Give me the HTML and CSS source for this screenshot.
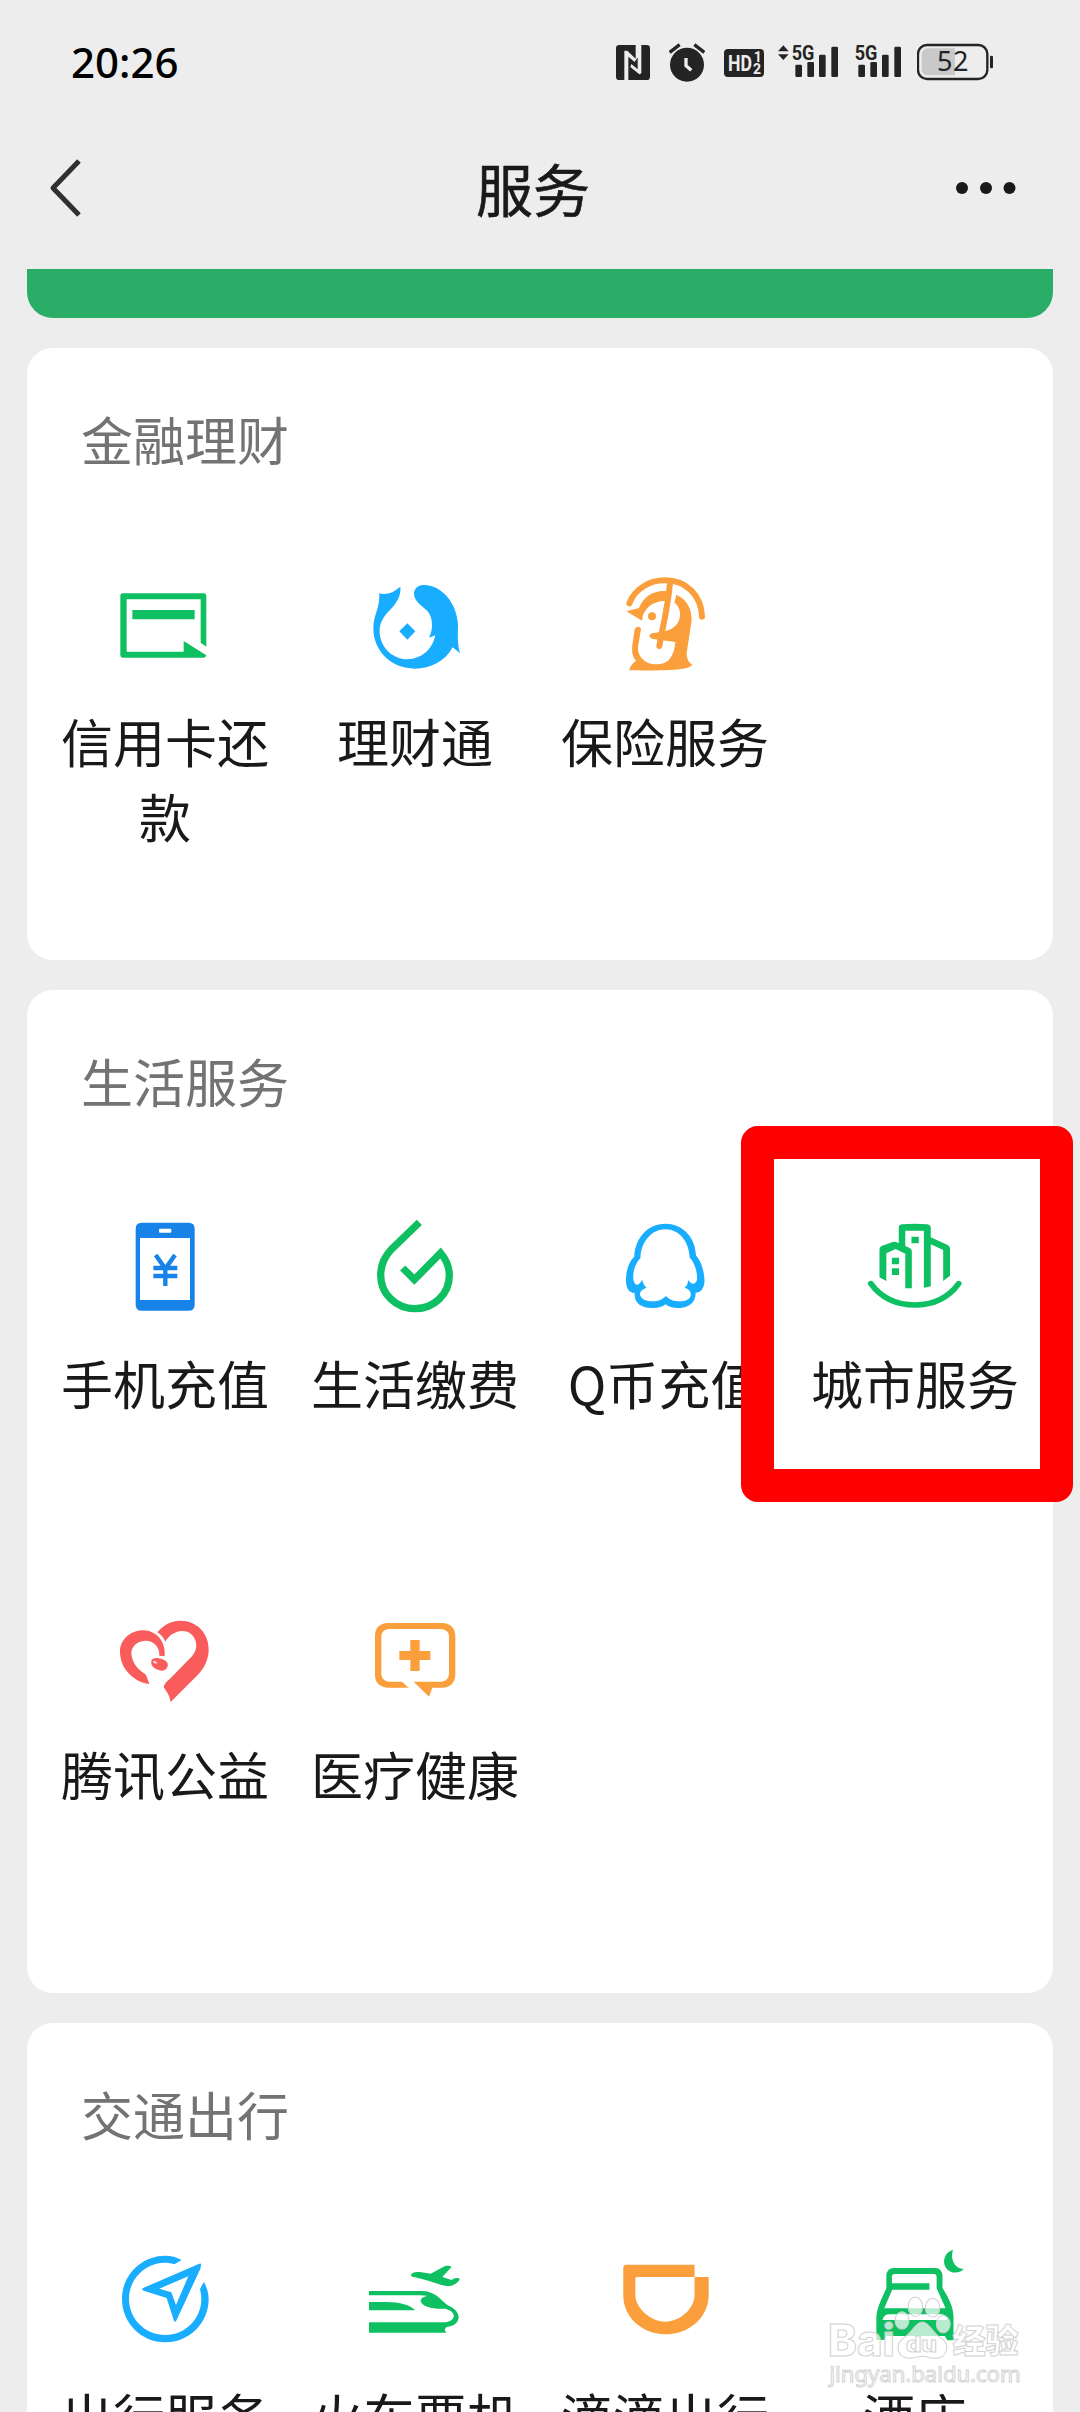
FILE: index.html
```html
<!DOCTYPE html>
<html lang="zh-CN">
<head>
<meta charset="utf-8">
<title>服务</title>
<link rel="stylesheet" href="styles.css">
</head>
<body>
<div class="status-bar">
  <span class="clock">20:26</span>
  <div class="status-icons">
    <svg class="s-nfc" viewBox="48 66 102 126"><rect x="48" y="75" width="102" height="105" rx="10" fill="#242424"/><path d="M73 180V92H82L107 116V75H114V110L104 126L85 110V180ZM113 75H124V160L118 163L91 141L94 132L113 148Z" fill="#ededed"/></svg>
    <svg class="s-alarm" viewBox="207 66 108 126"><circle cx="261" cy="134" r="51" fill="#242424"/><path d="M209 97L239 74M313 97L283 74" stroke="#242424" stroke-width="10"/><path d="M258 114V137L274 151" fill="none" stroke="#ededed" stroke-width="10"/></svg>
    <svg class="s-hd" viewBox="372 66 120 126"><rect x="372" y="87" width="120" height="84" rx="12" fill="#242424"/><text x="384" y="152" class="hd-text" textLength="72" lengthAdjust="spacingAndGlyphs">HD</text><text x="461" y="125" class="hd-num">1</text><text x="459" y="162" class="hd-num">2</text></svg>
    <svg class="s-sig1" viewBox="534 66 180 126"><path d="M534 94L550 76L566 94ZM534 103L550 120L566 103Z" fill="#242424"/><g fill="#242424"><rect x="586" y="134" width="20" height="37" rx="4"/><rect x="622" y="126" width="20" height="45" rx="4"/><rect x="657" y="104" width="20" height="67" rx="4"/><rect x="694" y="80" width="20" height="91" rx="4"/></g><text x="575" y="120" class="net" textLength="68" lengthAdjust="spacingAndGlyphs">5G</text></svg>
    <svg class="s-sig2" viewBox="765 66 138 126"><g fill="#242424"><rect x="775" y="134" width="20" height="37" rx="4"/><rect x="811" y="126" width="20" height="45" rx="4"/><rect x="846" y="104" width="20" height="67" rx="4"/><rect x="883" y="80" width="20" height="91" rx="4"/></g><text x="764" y="120" class="net" textLength="68" lengthAdjust="spacingAndGlyphs">5G</text></svg>
    <svg class="s-bat" viewBox="951 66 228 126"><path d="M985 85H1065V166H985Q965 166 965 146V105Q965 85 985 85Z" fill="#c9c9c9"/><rect x="954" y="75" width="208" height="102" rx="27" fill="none" stroke="#242424" stroke-width="7"/><rect x="1170" y="107" width="9" height="38" rx="4" fill="#242424"/><text x="1058" y="154" class="bat-text" textLength="94">52</text></svg>
  </div>
</div>
<header class="nav">
  <svg class="back" viewBox="0 0 40 60"><path d="M33 3L7 30L33 57" fill="none" stroke="#303030" stroke-width="5" stroke-linejoin="round"/></svg>
  <h1>服务</h1>
  <svg class="more" viewBox="0 0 60 12"><circle cx="6" cy="6" r="6"/><circle cx="30" cy="6" r="6"/><circle cx="53.500" cy="6" r="6"/></svg>
</header>
<main class="content">
  <div class="wallet"></div>

  <section class="card">
    <h2>金融理财</h2>
    <div class="grid">
      <div class="item">
        <svg class="icon green" viewBox="225 582 300 300"><path d="M482 788V658H260V815H431V783L499 826Q497 833 492 833H248Q241 833 241 826V647Q241 640 248 640H492Q499 640 499 647V800Z"/><path d="M277 690H464V718H277Z"/></svg>
        <span>信用卡还款</span>
      </div>
      <div class="item">
        <svg class="icon sky" viewBox="975 582 300 300"><path d="M1081 620C1084 645 1072 667 1050 690C1027 713 1017 733 1019 760C1023 806 1060 838 1102 838C1145 837 1177 808 1186 766L1167 773C1180 750 1180 713 1162 693C1150 680 1138 675 1128 660C1115 640 1124 617 1148 615C1203 613 1250 667 1254 733C1254 770 1251 785 1260 820L1238 802C1215 845 1170 866 1126 866C1052 866 1000 812 1000 745C1000 705 1020 685 1018 640C1040 646 1060 638 1081 620Z"/><path d="M1102 730L1126 754L1102 779L1078 754Z"/></svg>
        <span>理财通</span>
      </div>
      <div class="item">
        <svg class="icon orange" viewBox="225 102 300 300"><path d="M268 190C285 145 330 121 375 121C438 121 484 165 486 230M390 128C384 200 370 250 358 318" fill="none" stroke="#fa9f3c" stroke-width="18" stroke-linecap="round"/><path d="M259 214L297 204C310 170 340 150 380 153L376 183C340 182 309 205 306 242Z"/><circle cx="336" cy="229" r="12"/><path d="M409 164C440 178 455 205 455 240L440 340C440 355 445 368 457 374C446 388 410 392 268 391C268 382 275 372 288 362C277 350 275 335 277 315L284 268C287 257 303 258 303 268L294 320C292 352 318 373 350 373C385 373 402 350 406 306L338 297C325 292 325 282 338 280L365 275C400 272 422 250 420 220C419 202 410 192 403 188Z"/></svg>
        <span>保险服务</span>
      </div>
    </div>
  </section>

  <section class="card">
    <h2>生活服务</h2>
    <div class="grid">
      <div class="item">
        <svg class="icon blue" viewBox="225 108 300 300"><path fill-rule="evenodd" d="M305 128H446Q464 128 464 146V374Q464 392 446 392H305Q287 392 287 374V146Q287 128 305 128ZM300 174V360H450V174ZM360 146Q357 146 357 149V155Q357 158 360 158H391Q394 158 394 155V149Q394 146 391 146Z"/><path d="M347 225L373 262H379L405 225M340 264H412M340 288H412M376 262V318" fill="none" stroke="#1783e8" stroke-width="13"/></svg>
        <span>手机充值</span>
      </div>
      <div class="item">
        <svg class="icon" viewBox="975 108 300 300"><path d="M1138 127L1055 207C1034 229 1022 255 1022 285C1022 342 1068 386 1125 386C1182 386 1228 342 1228 286C1228 261 1218 238 1202 219L1123 299L1088 264" fill="none" stroke="#0fc062" stroke-width="22"/></svg>
        <span>生活缴费</span>
      </div>
      <div class="item">
        <svg class="icon sky" viewBox="218 318 290.400 300" preserveAspectRatio="none"><path fill-rule="evenodd" d="M364 341C412 341 452 380 453 436C470 455 478 490 478 515C476 535 468 547 452 548C454 578 430 595 402 594C385 594 372 590 365 583C355 592 340 595 325 594C295 594 273 580 275 549C255 548 249 530 250 505C251 480 258 455 274 440C276 385 312 341 364 341ZM364 358C325 358 293 395 292 444C276 463 270 480 271 508C275 530 287 528 297 509C299 518 303 528 310 533C295 538 289 545 291 556C296 570 310 574 328 574C345 574 355 568 366 558C377 570 390 574 405 574C425 574 435 568 438 556C440 545 432 537 420 533C428 527 430 520 430 510C440 524 450 526 456 510C458 485 448 455 435 443C433 395 405 358 364 358Z"/></svg>
        <span>Q币充值</span>
      </div>
      <div class="item">
        <svg class="icon green" viewBox="944 318 290.400 300" preserveAspectRatio="none"><path d="M986 502V420Q986 410 994 407L1022 397Q1030 393 1042 400V352Q1043 344 1052 343Q1088 340 1125 343Q1135 345 1135 354V382L1184 405Q1191 408 1191 416V497L1171 513V420L1135 403V529L1115 533V362H1061V408L1074 414Q1080 418 1080 424V535H1061V431L1033 417L1006 430V513Z"/><path d="M1079 380H1100V400H1079ZM1022 443H1043V463H1022ZM1022 475H1043V495H1022Z"/><path d="M961 521C990 562 1035 585 1089 585C1142 585 1187 562 1216 521" fill="none" stroke="#0fc062" stroke-width="17" stroke-linecap="round"/></svg>
        <span>城市服务</span>
      </div>
      <div class="item">
        <svg class="icon red" viewBox="225 81 300 300"><path d="M352 157C370 135 395 122 422 122C470 122 508 160 506 212C504 245 490 267 470 288L392 366C388 345 380 335 371 322C372 312 380 304 390 296L450 235C465 220 471 205 468 190C465 165 445 151 422 153C400 156 385 170 376 185C370 172 362 163 352 157Z"/><path d="M328 312C280 305 240 265 240 215C240 180 270 151 310 151C350 152 378 185 374 229L358 227C360 200 340 181 315 182C290 184 274 200 274 220C276 250 295 270 318 284Z"/><path d="M334 244C335 235 348 232 362 236C378 240 386 248 383 258C380 270 370 275 356 270C340 265 332 256 334 244Z"/><ellipse cx="345" cy="247" rx="7" ry="4" fill="#ffc4c4" transform="rotate(15 345 247)"/></svg>
        <span>腾讯公益</span>
      </div>
      <div class="item">
        <svg class="icon orange" viewBox="975 81 300 300"><path d="M1106 323H1044Q1005 320 1005 284V168Q1005 131 1044 129H1207Q1244 131 1246 168V284Q1244 321 1207 323H1177L1167 350L1121 305H1204Q1226 303 1227 281V170Q1226 149 1204 147H1047Q1025 149 1024 170V281Q1025 303 1047 305H1086Z"/><path d="M1111 180H1139V213H1171V240H1139V273H1111V240H1078V213H1111Z"/></svg>
        <span>医疗健康</span>
      </div>
    </div>
  </section>

  <section class="card">
    <h2>交通出行</h2>
    <div class="grid">
      <div class="item">
        <svg class="icon sky" viewBox="225 567 300 300"><path d="M425 600L403 613C385 607 365 607 347 612C300 625 267 667 267 717C267 777 316 825 376 825C435 825 484 777 484 717C484 706 482 697 480 688Q484 678 492 666C501 684 506 700 506 717C506 789 448 847 376 847C304 847 246 789 246 717C246 645 304 587 376 587C393 587 410 591 425 600Z"/><path fill-rule="evenodd" d="M478 611Q484 608 483 616L481 626L410 780Q405 791 401 780L380 714L311 692Q302 688 311 683ZM445 649L358 686L394 697L408 735Z"/></svg>
        <span>出行服务</span>
      </div>
      <div class="item">
        <svg class="icon green" viewBox="975 567 300 300"><path d="M987 693H1145C1185 693 1200 718 1222 735C1243 745 1255 755 1256 772C1255 790 1240 799 1220 801Q1210 808 1219 818H987V787H1205C1232 788 1243 777 1241 765C1238 754 1228 750 1216 746C1180 748 1144 740 1142 722C1143 713 1155 708 1166 708C1150 705 1135 706 1120 706H987Z"/><path d="M987 726H1040C1080 726 1110 735 1126 751H987Z"/><path d="M1113 645C1115 636 1130 634 1145 637L1172 641L1215 618C1225 616 1235 618 1234 622L1207 651L1235 660C1242 652 1258 652 1259 658C1255 668 1240 678 1225 679C1200 677 1165 660 1125 652C1117 651 1113 649 1113 645Z"/></svg>
        <span>火车票机票</span>
      </div>
      <div class="item">
        <svg class="icon orange" viewBox="218 87 290.400 300" preserveAspectRatio="none"><path d="M252 134H449V171H282Q277 171 277 176V225C277 262 320 305 364 305C408 305 449 265 449 225V171H490V225C490 295 430 343 366 343C300 343 242 295 242 225V144Q242 134 252 134Z"/></svg>
        <span>滴滴出行</span>
      </div>
      <div class="item">
        <svg class="icon green" viewBox="944 87 290.400 300" preserveAspectRatio="none"><path fill-rule="evenodd" d="M1006 205V168Q1006 145 1028 144H1148Q1168 145 1169 168V203C1190 240 1200 260 1201 290V361H1183L1176 348H1005L1000 360H977V290C979 265 990 240 1006 205ZM1022 190H1131V209H1023L1000 265H1178L1152 205V172Q1152 162 1144 162H1030Q1022 162 1022 172ZM995 300H1183Q1180 283 1165 283H1015Q998 283 995 300Z"/><path d="M1200 89C1190 115 1205 148 1231 146C1222 158 1205 160 1193 155C1165 142 1168 98 1200 89Z"/></svg>
        <span>酒店</span>
      </div>
    </div>
  </section>
</main>

<div class="highlight"></div>
<svg class="watermark" viewBox="830 220 570 290" preserveAspectRatio="none">
  <g fill="#fff" fill-opacity=".7" stroke="#d2d2d2" stroke-width="3">
    <ellipse cx="1090" cy="261" rx="21" ry="29"/><ellipse cx="1140" cy="264" rx="21" ry="28"/><ellipse cx="1051" cy="302" rx="20" ry="26"/><ellipse cx="1171" cy="313" rx="20" ry="26"/>
    <path d="M1110 307C1130 307 1145 345 1165 355C1195 375 1180 415 1150 415C1130 415 1120 409 1110 409C1095 409 1085 416 1070 415C1035 412 1030 375 1055 355C1080 340 1090 307 1110 307Z"/>
    <text x="836" y="409" class="wm-latin" font-size="130" textLength="194" lengthAdjust="spacingAndGlyphs">Bai</text>
    <text x="1063" y="395" class="wm-latin" font-size="64" textLength="90" lengthAdjust="spacingAndGlyphs">du</text>
    <text x="1198" y="400" class="wm-cjk" font-size="100" textLength="192" lengthAdjust="spacingAndGlyphs">经验</text>
    <text x="840" y="487" class="wm-url" font-size="66" textLength="556" lengthAdjust="spacingAndGlyphs">jingyan.baidu.com</text>
  </g>
</svg>
</body>
</html>
```
FILE: styles.css
```css
* { box-sizing: border-box; }
html { overflow: hidden; }
body {
  margin: 0;
  position: relative;
  width: 1080px;
  height: 2412px;
  overflow: hidden;
  background: #ededed;
  color: #191919;
  font-family: "Noto Sans CJK SC", sans-serif;
}
svg { display: block; }

.status-bar {
  height: 124px;
  padding: 0 87px 0 71px;
  display: flex;
  justify-content: space-between;
}
.clock {
  font: 500 42px/123px "Noto Sans", sans-serif;
  color: #000;
}
.status-icons { display: flex; padding-top: 42px; }
.status-icons svg { height: 42px; }
.s-nfc { width: 34px; }
.s-alarm { width: 36px; margin-left: 19px; }
.s-hd { width: 40px; margin-left: 19px; }
.s-sig1 { width: 60px; margin-left: 14px; }
.s-sig2 { width: 46px; margin-left: 17px; }
.s-bat { width: 76px; margin-left: 16px; }
.hd-text { font: 700 66px Roboto, sans-serif; fill: #ededed; }
.hd-num { font: 700 42px Roboto, sans-serif; fill: #ededed; }
.net {
  font: 700 62px Roboto, sans-serif;
  fill: #242424;
  stroke: #ededed;
  stroke-width: 6px;
  paint-order: stroke;
}
.bat-text { font: 400 81px "Noto Sans", sans-serif; fill: #242424; text-anchor: middle; }

.nav {
  height: 145px;
  padding: 0 64px 17px 46px;
  display: grid;
  grid-template-columns: 40px 1fr 60px;
  align-items: center;
}
.nav h1 {
  margin: 0;
  padding: 0 0 2px 24px;
  font-size: 57px;
  font-weight: 400;
  line-height: 82px;
  text-align: center;
  -webkit-text-stroke: .6px #191919;
}
.back { width: 40px; height: 60px; }
.more { width: 60px; height: 12px; fill: #191919; }

.content {
  display: flex;
  flex-direction: column;
  gap: 30px;
  padding: 0 27px;
}
.wallet {
  height: 49px;
  background: #2aae67;
  border-radius: 0 0 26px 26px;
}
.card {
  background: #fff;
  border-radius: 26px;
  padding: 53px 13px 0;
}
.card h2 {
  margin: 0 0 98px;
  padding-left: 41px;
  font-size: 52px;
  font-weight: 400;
  line-height: 75px;
  color: #737373;
}
.grid {
  display: grid;
  grid-template-columns: repeat(4, 250px);
  grid-auto-rows: 386px;
  row-gap: 5px;
}
.item {
  display: flex;
  flex-direction: column;
  align-items: center;
  gap: 29px;
}
.item span {
  width: 250px;
  font-size: 52px;
  line-height: 75px;
  text-align: center;
}
.icon { width: 100px; height: 100px; }
.green { fill: #0fc062; }
.sky { fill: #18adff; }
.blue { fill: #1783e8; }
.orange { fill: #fa9f3c; }
.red { fill: #fa5c5c; }

.highlight {
  position: absolute;
  left: 741px;
  top: 1126px;
  width: 332px;
  height: 376px;
  border: 33px solid #fe0000;
  border-radius: 17px;
}
.watermark {
  position: absolute;
  left: 826px;
  top: 2293px;
  width: 196px;
  height: 97px;
}
.wm-latin { font-family: Inter, "Liberation Sans", sans-serif; font-weight: 800; }
.wm-cjk { font-family: "Noto Sans CJK SC", sans-serif; font-weight: 900; }
.wm-url { font-family: "Noto Sans", sans-serif; }
```
